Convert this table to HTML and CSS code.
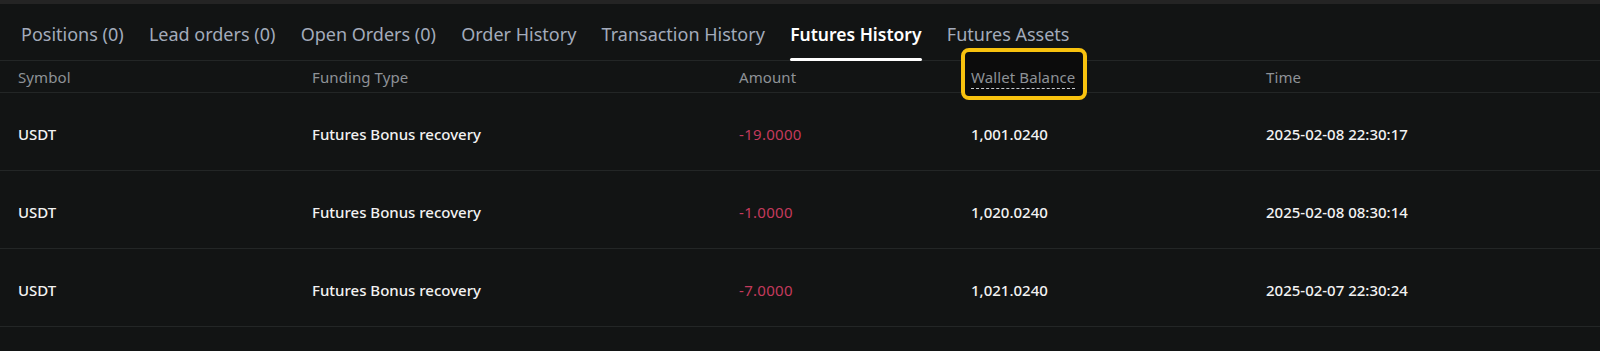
FILE: index.html
```html
<!DOCTYPE html>
<html lang="en">
<head>
<meta charset="utf-8">
<title>Futures History</title>
<link rel="stylesheet" href="styles.css">
</head>
<body>
<div class="topbar"></div>
<div class="panel">
  <nav class="tabs">
    <div class="tab">Positions (0)</div>
    <div class="tab">Lead orders (0)</div>
    <div class="tab">Open Orders (0)</div>
    <div class="tab">Order History</div>
    <div class="tab">Transaction History</div>
    <div class="tab active">Futures History</div>
    <div class="tab">Futures Assets</div>
  </nav>
  <div class="table">
    <div class="row head">
      <div class="cell">Symbol</div>
      <div class="cell">Funding Type</div>
      <div class="cell">Amount</div>
      <div class="cell"><span class="hl"><span class="dashed">Wallet Balance</span></span></div>
      <div class="cell">Time</div>
    </div>
    <div class="row">
      <div class="cell">USDT</div>
      <div class="cell">Futures Bonus recovery</div>
      <div class="cell neg">-19.0000</div>
      <div class="cell">1,001.0240</div>
      <div class="cell">2025-02-08 22:30:17</div>
    </div>
    <div class="row">
      <div class="cell">USDT</div>
      <div class="cell">Futures Bonus recovery</div>
      <div class="cell neg">-1.0000</div>
      <div class="cell">1,020.0240</div>
      <div class="cell">2025-02-08 08:30:14</div>
    </div>
    <div class="row">
      <div class="cell">USDT</div>
      <div class="cell">Futures Bonus recovery</div>
      <div class="cell neg">-7.0000</div>
      <div class="cell">1,021.0240</div>
      <div class="cell">2025-02-07 22:30:24</div>
    </div>
  </div>
</div>
</body>
</html>
```
FILE: styles.css
```css
* { box-sizing: border-box; }
html, body {
  margin: 0;
  padding: 0;
  background: #121414;
  font-family: "Noto Sans", "Liberation Sans", sans-serif;
  height: 351px;
  overflow: hidden;
}
.topbar {
  height: 4px;
  background: #242424;
}
.panel {
  background: #121414;
}
.tabs {
  display: flex;
  gap: 25.3px;
  padding-left: 21px;
  height: 57px;
  align-items: stretch;
  border-bottom: 1px solid #232626;
}
.tab {
  font-size: 18px;
  color: #a3abbb;
  display: flex;
  align-items: center;
  padding-top: 3px;
  position: relative;
}
.tab.active {
  color: #ffffff;
  font-weight: 600;
  font-size: 17.5px;
}
.tab.active::after {
  content: "";
  position: absolute;
  left: 0;
  right: 0;
  bottom: -1px;
  height: 3px;
  border-radius: 2px;
  background: #ffffff;
}
.row {
  display: grid;
  grid-template-columns: 294px 427px 232px 295px 1fr;
  padding-left: 18px;
  padding-top: 4px;
  height: 78px;
  align-items: center;
  border-bottom: 1px solid #232626;
  font-size: 15px;
  color: #f2f2f2;
  font-weight: 500;
}
.row.head {
  height: 32px;
  padding-top: 0;
  font-weight: 400;
  color: #8e9297;
  font-size: 15px;
  letter-spacing: 0.1px;
}
.neg {
  color: #c43a5c;
  font-weight: 400;
  letter-spacing: 0.3px;
}
.hl {
  position: relative;
  display: inline-block;
}
.hl::before {
  content: "";
  position: absolute;
  left: -10px;
  right: -12px;
  top: -19px;
  bottom: -13px;
  border: 4px solid #f8c20e;
  border-radius: 8px;
  background: #0c0c0c;
  z-index: 0;
}
.dashed {
  position: relative;
  z-index: 1;
  border-bottom: 1px dashed #c9ccd0;
  padding-bottom: 1px;
}
```
